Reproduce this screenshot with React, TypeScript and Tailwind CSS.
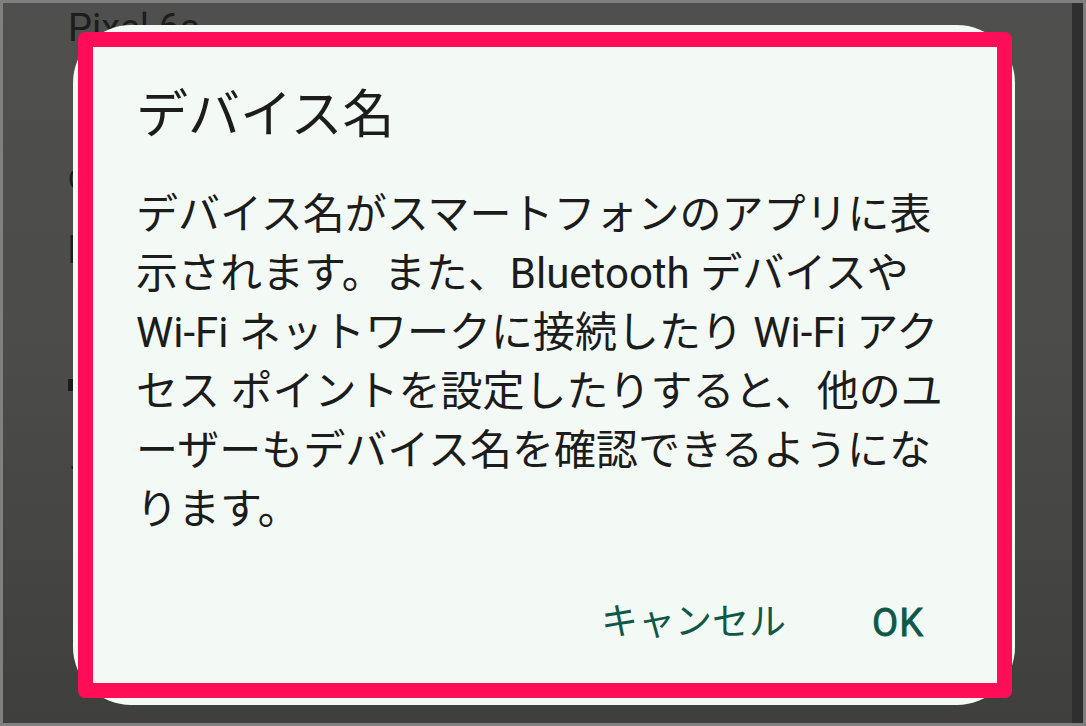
import React from 'react';

const font = { fontFamily: "Roboto, 'Noto Sans CJK JP', sans-serif" };

// Settings page that sits under the scrim
function BackgroundPage() {
    return (
        <div className="pl-[65px] pt-[2px] text-[#1c1d1c]" style={font}>
            <div className="text-[38px] leading-[46px]">Pixel 6a</div>
            <div className="mt-[112px] text-[28px] leading-[34px]">Chromecast</div>
            <div className="mt-[34px] text-[36px] leading-[40px] text-[#1e1f1e]">hostname</div>
            <div className="mt-[108px] h-[12px] w-[9px] bg-[#1a1b1a]" />
            <div className="mt-[56px] text-[34px] leading-[40px]">イ</div>
            <div className="mt-[124px] text-[32px] leading-[38px] text-[#123f33]">え</div>
        </div>
    );
}

function DeviceNameDialog() {
    return (
        <div className="absolute left-[70px] top-[22px] w-[942px] h-[680px] rounded-[58px] bg-[#f3f9f5] pl-[63px] pt-[61px] pb-[58px] flex flex-col" style={font}>
            <h2 className="text-[52px] leading-[60px] font-normal text-[#1b1c1b]">デバイス名</h2>
            <p className="mt-[39px] text-[42px] leading-[59px] text-[#1b1c1b] whitespace-nowrap">
                デバイス名がスマートフォンのアプリに表<br />
                示されます。また、Bluetooth デバイスや<br />
                Wi-Fi ネットワークに接続したり Wi-Fi アク<br />
                セス ポイントを設定したりすると、他のユ<br />
                ーザーもデバイス名を確認できるようにな<br />
                ります。
            </p>
            <div className="mt-auto flex justify-end items-center gap-[86px] pr-[91px]">
                <button className="text-[37px] leading-[48px] font-normal text-[#0f5846]">キャンセル</button>
                <button className="text-[38px] leading-[48px] font-normal tracking-[1px] text-[#0f5846] [-webkit-text-stroke:0.8px_#0f5846]">OK</button>
            </div>
        </div>
    );
}

export default function App() {
    return (
        <div className="w-[1086px] h-[726px] bg-[#808080] p-[3px] overflow-hidden">
            <div className="flex h-full">
                <div className="relative flex-1 bg-gradient-to-b from-[#4f504e] via-[#4b4c4a] to-[#3f403e] overflow-hidden">
                    <BackgroundPage />
                    <DeviceNameDialog />
                    {/* annotation frame */}
                    <div className="absolute left-[75px] top-[29px] w-[934px] h-[666px] border-[15px] border-[#ff0d56] rounded-[7px]" />
                </div>
                <div className="w-[11px] bg-[#2e2f2e]" />
            </div>
        </div>
    );
}
